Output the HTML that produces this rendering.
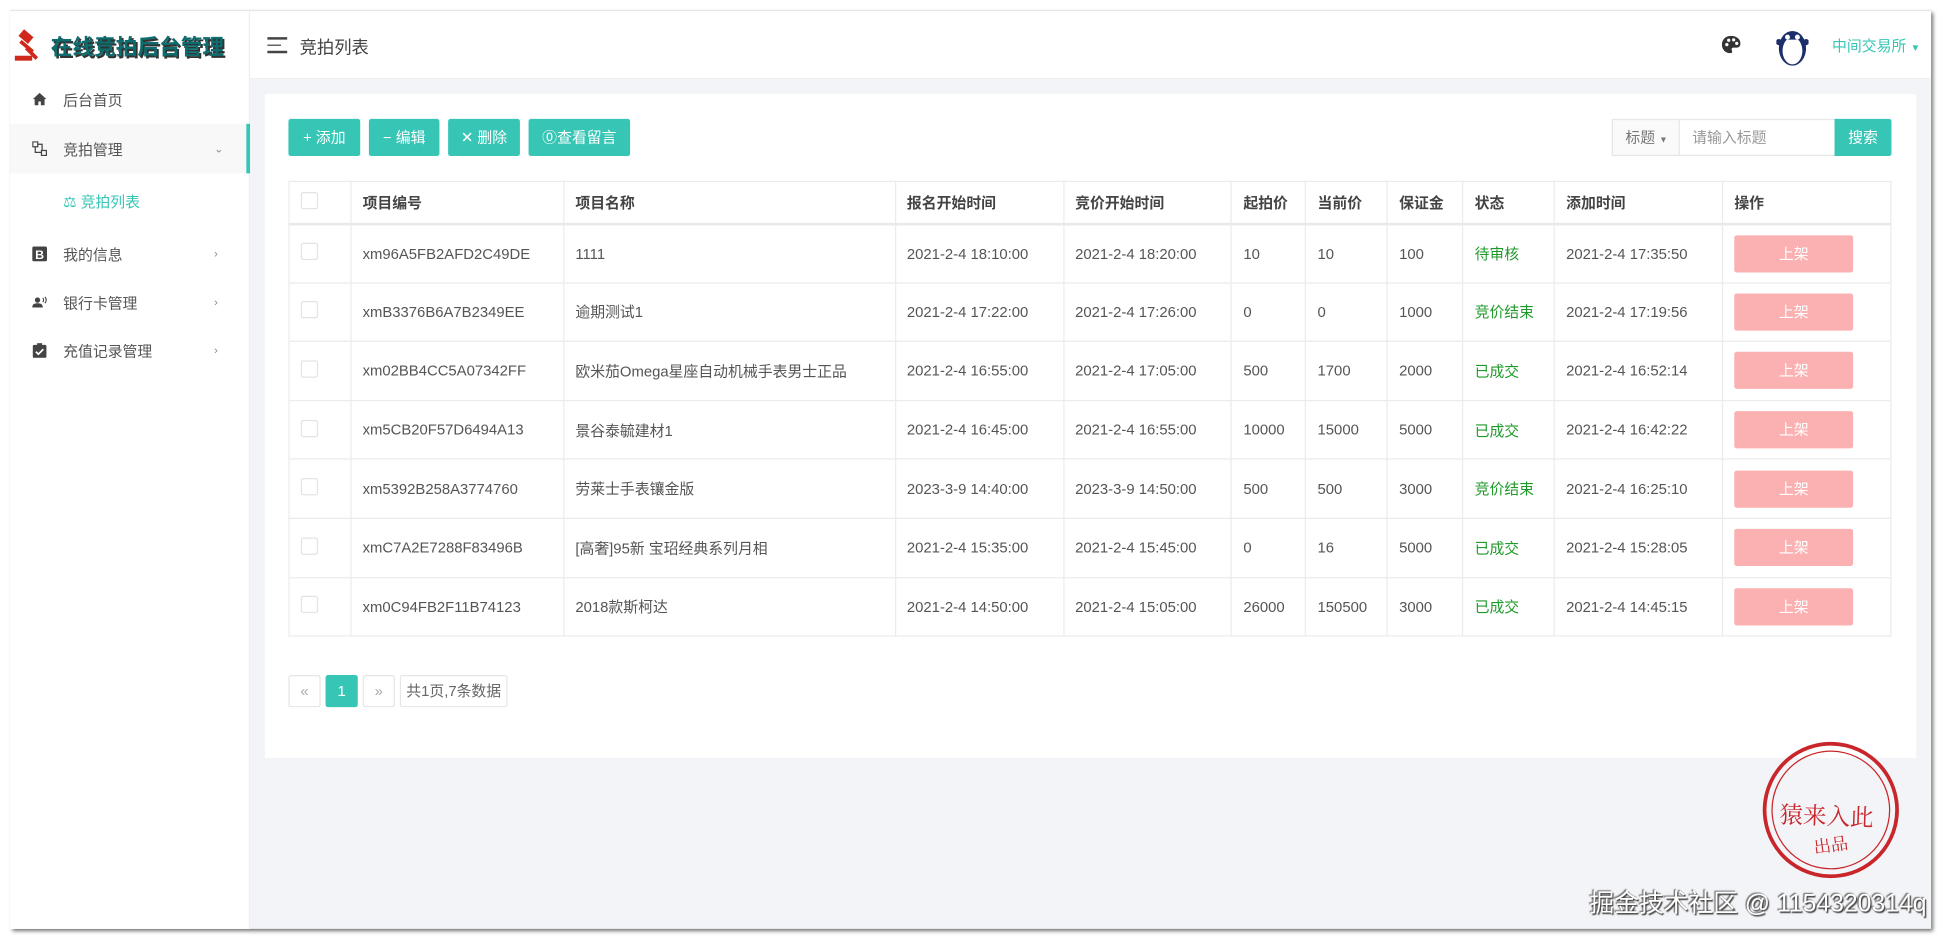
<!DOCTYPE html>
<html><head><meta charset="utf-8"><style>
*{box-sizing:border-box;margin:0;padding:0}
html,body{width:1941px;height:940px;overflow:hidden;background:#fff}
body{font-family:"Liberation Sans","Noto Sans CJK SC",sans-serif;color:#555}
#s{position:absolute;left:0;top:0;width:1568px;height:759px;transform:scale(1.23788,1.2385);transform-origin:0 0;background:#fff}
.win{position:absolute;left:8px;top:8px;width:1552px;height:742px;background:#f3f4f7;box-shadow:2px 2px 3px rgba(0,0,0,.55);border-top:1px solid #e6e6e6;overflow:hidden}
.side{position:absolute;left:0;top:0;width:194px;height:742px;background:#fff;border-right:1px solid #eceef2}
.head{position:absolute;left:194px;top:0;right:0;height:55px;background:#fff;border-bottom:1px solid #eceef2}
.logo{position:absolute;left:2px;top:14px;height:28px;display:flex;align-items:center}
.logo span{font-weight:bold;font-size:17.5px;color:#0e6b6e;text-shadow:1.5px 1.5px 0 #333;letter-spacing:0;margin-left:3px}
.mi{position:absolute;left:0;width:194px;height:40px;display:flex;align-items:center;font-size:12px;color:#555}
.mi .ic{position:absolute;left:18px;width:12px;height:12px}
.mi .t{position:absolute;left:43px}
.mi .ar{position:absolute;left:165px;font-size:9px;color:#888}
.card{position:absolute;left:206px;top:67px;width:1334px;height:536px;background:#fff}
.btn{position:absolute;top:20px;height:30px;background:#37c6b5;color:#fff;font-size:12px;line-height:30px;text-align:center;border-radius:2px}
table{position:absolute;left:19px;top:70px;width:1295px;border-collapse:collapse;font-size:12px;color:#555}
td,th{border:1px solid #ebebeb;text-align:left;padding:0 0 0 9px;font-weight:normal;white-space:nowrap}
th{height:34px;font-weight:bold;color:#444;border-bottom:2px solid #e8e8e8}
td{height:47.6px}
.cb{display:inline-block;width:14px;height:14px;border:1px solid #e3e3e3;border-radius:2px;background:#fff}
.g{color:#1f9a2a}
.up{display:block;width:96px;height:30px;background:#fbb1b1;color:#fff;text-align:center;line-height:30px;border-radius:2px}
.pg{position:absolute;top:469px;height:26px;border:1px solid #e6e6e6;font-size:12px;line-height:24px;text-align:center;color:#aaa;background:#fff;border-radius:2px}
</style></head><body><div id="s">
<div class="win">
 <div class="side">
  <div class="logo">
   <svg width="28" height="28" viewBox="0 0 28 28"><g fill="#d1281c"><rect x="6" y="3" width="10" height="7" transform="rotate(40 11 6.5)"/><rect x="10" y="8" width="3" height="13" transform="rotate(-50 11.5 14.5)"/><rect x="2" y="22" width="14" height="4"/><rect x="14" y="14" width="3" height="12" transform="rotate(-45 15.5 20)"/></g></svg>
   <span>在线竞拍后台管理</span>
  </div>
  <div class="mi" style="top:51px"><svg class="ic" viewBox="0 0 12 12"><path d="M6 1L0.5 6H2v5h3V8h2v3h3V6h1.5z" fill="#444"/></svg><span class="t">后台首页</span></div>
  <div class="mi" style="top:91px;background:#f8f8f8"><svg class="ic" viewBox="0 0 12 12"><g fill="none" stroke="#444"><rect x="0.5" y="0.5" width="4" height="4"/><rect x="7.5" y="7.5" width="4" height="4"/><path d="M2.5 4.5v4.5h5M4.5 2.5H8v5"/></g></svg><span class="t">竞拍管理</span><span class="ar">⌄</span><div style="position:absolute;right:0;top:0;width:3px;height:40px;background:#37c6b5"></div></div>
  <div class="mi" style="top:133px;color:#37c6b5"><span class="t" style="left:43px">⚖ 竞拍列表</span></div>
  <div class="mi" style="top:176px"><svg class="ic" viewBox="0 0 12 12"><rect width="12" height="12" rx="1.5" fill="#444"/><text x="6" y="10" font-size="10" font-weight="bold" fill="#fff" text-anchor="middle" font-family="Liberation Sans">B</text></svg><span class="t">我的信息</span><span class="ar">›</span></div>
  <div class="mi" style="top:215px"><svg class="ic" viewBox="0 0 14 12"><circle cx="5" cy="4" r="2.5" fill="#444"/><path d="M0 11c0-3 2-4 5-4s5 1 5 4z" fill="#444"/><path d="M10 2q1.5 2 0 4M12 1q2.5 3 0 6" stroke="#444" fill="none"/></svg><span class="t">银行卡管理</span><span class="ar">›</span></div>
  <div class="mi" style="top:254px"><svg class="ic" viewBox="0 0 12 12"><rect x="0.5" y="1.5" width="11" height="10.5" rx="1" fill="#444"/><rect x="4" y="0" width="4" height="2.5" fill="#444"/><path d="M3 7l2 2 4-4" stroke="#fff" stroke-width="1.4" fill="none"/></svg><span class="t">充值记录管理</span><span class="ar">›</span></div>
 </div>
 <div class="head">
  <div style="position:absolute;left:14px;top:21px;width:16px"><div style="height:1.5px;background:#444;margin-bottom:4px"></div><div style="height:1.5px;background:#444;margin-bottom:4px;width:11px"></div><div style="height:1.5px;background:#444"></div></div>
  <div style="position:absolute;left:40px;top:19px;font-size:14px;color:#444">竞拍列表</div>
  <svg style="position:absolute;left:1189px;top:20px" width="15" height="14" viewBox="0 0 15 14"><path d="M7.5 0C3 0 0 3 0 7c0 4 3 7 7 7 1.5 0 1.5-1.5 1-2.5-.5-1 0-2 1.5-2h2C14 9.5 15 8 15 6 15 2.5 11.5 0 7.5 0z" fill="#333"/><circle cx="4" cy="7" r="1.3" fill="#fff"/><circle cx="5.5" cy="3.5" r="1.3" fill="#fff"/><circle cx="9.5" cy="3.2" r="1.3" fill="#fff"/><circle cx="12" cy="6" r="1.3" fill="#fff"/></svg>
  <svg style="position:absolute;left:1233px;top:11px" width="26" height="34" viewBox="0 0 26 34"><ellipse cx="13" cy="19" rx="11" ry="14" fill="#1d2f6b"/><ellipse cx="13" cy="21" rx="8" ry="11" fill="#fff"/><rect x="6" y="8" width="14" height="4" fill="#1d2f6b"/><circle cx="9" cy="10" r="2" fill="#fff"/><circle cx="17" cy="10" r="2" fill="#fff"/><circle cx="2" cy="14" r="2.5" fill="#1d2f6b"/><circle cx="24" cy="14" r="2.5" fill="#1d2f6b"/></svg>
  <div style="position:absolute;left:1278px;top:19px;font-size:12px;color:#37c6b5">中间交易所 <span style="font-size:8px">▼</span></div>
 </div>
 <div class="card">
  <div class="btn" style="left:19px;width:58px">+ 添加</div>
  <div class="btn" style="left:84px;width:57px">− 编辑</div>
  <div class="btn" style="left:148px;width:58px">✕ 删除</div>
  <div class="btn" style="left:213px;width:82px">⓪查看留言</div>
  <div style="position:absolute;left:1088px;top:20px;width:55px;height:30px;border:1px solid #e6e6e6;background:#fafafa;font-size:12px;color:#777;line-height:28px;padding-left:10px">标题 <span style="font-size:7px">▼</span></div>
  <div style="position:absolute;left:1143px;top:20px;width:126px;height:30px;border:1px solid #e6e6e6;border-left:0;font-size:12px;color:#999;line-height:28px;padding-left:10px">请输入标题</div>
  <div class="btn" style="left:1268px;width:46px;border-radius:0 2px 2px 0">搜索</div>
  <table>
   <colgroup><col style="width:50px"><col style="width:172px"><col style="width:268px"><col style="width:136px"><col style="width:136px"><col style="width:60px"><col style="width:66px"><col style="width:61px"><col style="width:74px"><col style="width:136px"><col style="width:136px"></colgroup>
   <tr><th><span class="cb"></span></th><th>项目编号</th><th>项目名称</th><th>报名开始时间</th><th>竞价开始时间</th><th>起拍价</th><th>当前价</th><th>保证金</th><th>状态</th><th>添加时间</th><th>操作</th></tr>
   <tr><td><span class="cb"></span></td><td>xm96A5FB2AFD2C49DE</td><td>1111</td><td>2021-2-4 18:10:00</td><td>2021-2-4 18:20:00</td><td>10</td><td>10</td><td>100</td><td class="g">待审核</td><td>2021-2-4 17:35:50</td><td><span class="up">上架</span></td></tr>
   <tr><td><span class="cb"></span></td><td>xmB3376B6A7B2349EE</td><td>逾期测试1</td><td>2021-2-4 17:22:00</td><td>2021-2-4 17:26:00</td><td>0</td><td>0</td><td>1000</td><td class="g">竞价结束</td><td>2021-2-4 17:19:56</td><td><span class="up">上架</span></td></tr>
   <tr><td><span class="cb"></span></td><td>xm02BB4CC5A07342FF</td><td>欧米茄Omega星座自动机械手表男士正品</td><td>2021-2-4 16:55:00</td><td>2021-2-4 17:05:00</td><td>500</td><td>1700</td><td>2000</td><td class="g">已成交</td><td>2021-2-4 16:52:14</td><td><span class="up">上架</span></td></tr>
   <tr><td><span class="cb"></span></td><td>xm5CB20F57D6494A13</td><td>景谷泰毓建材1</td><td>2021-2-4 16:45:00</td><td>2021-2-4 16:55:00</td><td>10000</td><td>15000</td><td>5000</td><td class="g">已成交</td><td>2021-2-4 16:42:22</td><td><span class="up">上架</span></td></tr>
   <tr><td><span class="cb"></span></td><td>xm5392B258A3774760</td><td>劳莱士手表镶金版</td><td>2023-3-9 14:40:00</td><td>2023-3-9 14:50:00</td><td>500</td><td>500</td><td>3000</td><td class="g">竞价结束</td><td>2021-2-4 16:25:10</td><td><span class="up">上架</span></td></tr>
   <tr><td><span class="cb"></span></td><td>xmC7A2E7288F83496B</td><td>[高奢]95新 宝玿经典系列月相</td><td>2021-2-4 15:35:00</td><td>2021-2-4 15:45:00</td><td>0</td><td>16</td><td>5000</td><td class="g">已成交</td><td>2021-2-4 15:28:05</td><td><span class="up">上架</span></td></tr>
   <tr><td><span class="cb"></span></td><td>xm0C94FB2F11B74123</td><td>2018款斯柯达</td><td>2021-2-4 14:50:00</td><td>2021-2-4 15:05:00</td><td>26000</td><td>150500</td><td>3000</td><td class="g">已成交</td><td>2021-2-4 14:45:15</td><td><span class="up">上架</span></td></tr>
  </table>
  <div class="pg" style="left:19px;width:26px">«</div>
  <div class="pg" style="left:49px;width:26px;background:#37c6b5;border-color:#37c6b5;color:#fff">1</div>
  <div class="pg" style="left:79px;width:26px">»</div>
  <div class="pg" style="left:109px;width:87px;color:#666">共1页,7条数据</div>
 </div>
 <div style="position:absolute;left:1416px;top:590px;width:110px;height:110px;border:3px solid #c8262a;border-radius:50%;transform:rotate(-8deg)">
  <div style="position:absolute;inset:4px;border:1.5px solid #c8262a;border-radius:50%"></div>
  <div style="position:absolute;left:10px;top:42px;font-family:'Noto Serif CJK SC',serif;font-size:19px;color:#c8262a;transform:rotate(10deg)">猿来入此</div>
  <div style="position:absolute;left:34px;top:70px;font-family:'Noto Serif CJK SC',serif;font-size:14px;color:#c8262a">出品</div>
 </div>
 <div style="position:absolute;left:1276px;top:704px;font-size:20px;color:#fff;text-shadow:1px 1px 1px #333,-1px -1px 1px #666;white-space:nowrap">掘金技术社区 @ 1154320314q</div>
</div>
</div></body></html>
